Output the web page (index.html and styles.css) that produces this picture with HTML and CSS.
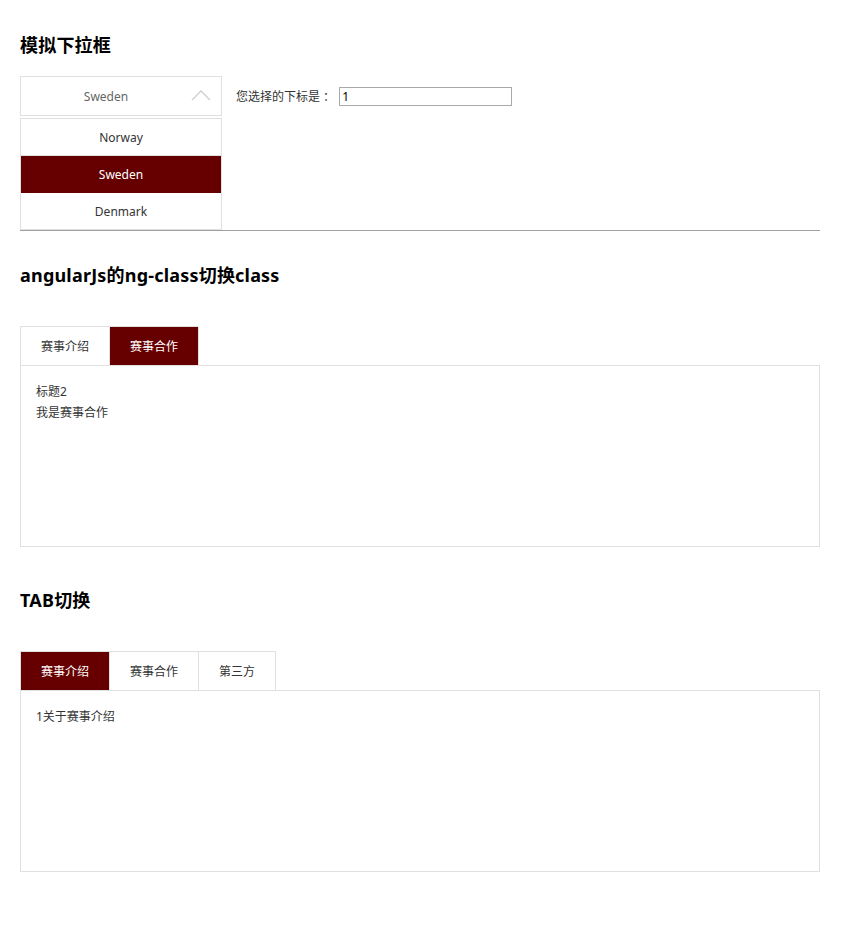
FILE: index.html
```html
<!DOCTYPE html>
<html lang="zh-CN">

<head>
    <meta charset="UTF-8">
    <meta name="viewport" content="width=device-width, initial-scale=1.0">
    <title>模拟下拉框 / TAB切换</title>
    <link rel="stylesheet" href="styles.css">
</head>

<body>
    <!-- 模拟下拉框 -->
    <div class="section section-select">
        <h2 class="title">模拟下拉框</h2>
        <div class="select-row">
            <div class="dropdown">
                <div class="dropdown-head">
                    <span class="dropdown-text">Sweden</span>
                    <svg class="dropdown-arrow" width="20" height="12" viewBox="0 0 20 12">
                        <path d="M1 11 L10 2 L19 11" fill="none" stroke="#cfcfcf" stroke-width="1.4" />
                    </svg>
                </div>
                <ul class="dropdown-list">
                    <li>Norway</li>
                    <li class="active">Sweden</li>
                    <li>Denmark</li>
                </ul>
            </div>
            <div class="select-result">
                <label for="index">您选择的下标是&nbsp;：</label>
                <input type="text" id="index" value="1">
            </div>
        </div>
    </div>

    <!-- angularJs的ng-class切换class -->
    <div class="section section-ng">
        <h2 class="title">angularJs的ng-class切换class</h2>
        <ul class="tabs">
            <li>赛事介绍</li>
            <li class="active">赛事合作</li>
        </ul>
        <div class="tab-content">
            <p>标题2</p>
            <p>我是赛事合作</p>
        </div>
    </div>

    <!-- TAB切换 -->
    <div class="section section-tab">
        <h2 class="title">TAB切换</h2>
        <ul class="tabs">
            <li class="active">赛事介绍</li>
            <li>赛事合作</li>
            <li>第三方</li>
        </ul>
        <div class="tab-content">
            <p>1关于赛事介绍</p>
        </div>
    </div>
</body>

</html>
```

FILE: styles.css
```css
* {
    margin: 0;
    padding: 0;
    box-sizing: border-box;
}

body {
    padding: 0 20px;
    font-family: "Noto Sans", "Noto Sans CJK SC", sans-serif;
    font-size: 12px;
    color: #333;
    background: #fff;
}

ul {
    list-style: none;
}

.section {
    width: 800px;
}

.title {
    font-size: 18px;
    font-weight: 700;
    line-height: 24px;
    color: #000;
    letter-spacing: 0.2px;
}

/* 模拟下拉框 */
.section-select {
    padding-top: 33px;
    border-bottom: 1px solid #a0a0a0;
}

.section-select .title {
    margin-bottom: 19px;
}

.select-row {
    display: flex;
    align-items: flex-start;
}

.dropdown {
    width: 202px;
}

.dropdown-head {
    height: 40px;
    border: 1px solid #e0e0e0;
    display: flex;
    align-items: center;
    padding-right: 10px;
}

.dropdown-text {
    flex: 1;
    text-align: center;
    color: #666;
    font-size: 12px;
}

.dropdown-arrow {
    display: block;
    margin-bottom: 3px;
}

.dropdown-list {
    margin-top: 2px;
    border: 1px solid #e0e0e0;
    border-bottom: 0;
}

.dropdown-list li {
    height: 37px;
    line-height: 38px;
    text-align: center;
    border-bottom: 1px solid #e0e0e0;
    color: #333;
}

.dropdown-list li.active {
    background: #660000;
    border-bottom-color: #660000;
    color: #fff;
}

.select-result {
    display: flex;
    align-items: center;
    height: 40px;
    margin-left: 14px;
}

.select-result label {
    color: #333;
    margin-right: 4px;
}

.select-result input {
    width: 173px;
    height: 19px;
    border: 1px solid #aaa;
    padding: 0 2px;
    font-size: 12px;
    font-family: "Noto Sans", sans-serif;
    color: #000;
    outline: none;
}

/* 选项卡 */
.section-ng {
    padding-top: 32px;
}

.section-tab {
    padding-top: 41px;
}

.section-ng .title,
.section-tab .title {
    margin-bottom: 39px;
}

.tabs {
    display: flex;
}

.tabs li {
    height: 39px;
    line-height: 40px;
    padding: 0 20px;
    border: 1px solid #e0e0e0;
    border-bottom: 0;
    margin-right: -1px;
    color: #333;
    cursor: pointer;
}

.tabs li.active {
    background: #660000;
    color: #fff;
}

.tab-content {
    height: 182px;
    border: 1px solid #e0e0e0;
    padding: 15px;
    line-height: 21px;
    color: #333;
}
```
